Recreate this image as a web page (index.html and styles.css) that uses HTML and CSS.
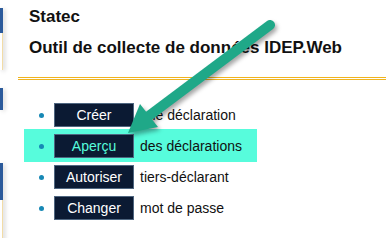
FILE: index.html
```html
<!DOCTYPE html>
<html lang="fr">
<head>
<meta charset="utf-8">
<title>IDEP.Web</title>
<link rel="stylesheet" href="styles.css">
</head>
<body>
<div class="page">
  <aside class="sidebar">
    <div class="card card-a"></div>
    <div class="card card-b"></div>
    <div class="card card-c"></div>
  </aside>
  <main class="main">
    <header class="head">
      <h1 class="title">Statec</h1>
      <h2 class="subtitle">Outil de collecte de données IDEP.Web</h2>
    </header>
    <ul class="menu">
      <li class="item"><span class="btn">Créer</span><span class="label">une déclaration</span></li>
      <li class="item active"><span class="btn">Aperçu</span><span class="label">des déclarations</span></li>
      <li class="item"><span class="btn">Autoriser</span><span class="label">tiers-déclarant</span></li>
      <li class="item"><span class="btn">Changer</span><span class="label">mot de passe</span></li>
    </ul>
  </main>
</div>
<svg class="arrow" width="386" height="238" viewBox="0 0 386 238">
  <line x1="270" y1="25" x2="146" y2="118" stroke="#1fa888" stroke-width="10" stroke-linecap="round"/>
  <polygon points="128,133 140,104 158,127" fill="#1fa888"/>
</svg>
</body>
</html>
```
FILE: styles.css
```css
html, body {
  margin: 0;
  padding: 0;
  background: #fff;
}
body {
  font-family: "Liberation Sans", Arial, sans-serif;
  color: #111;
  width: 386px;
  height: 238px;
  overflow: hidden;
  position: relative;
}
.page {
  display: flex;
}
.sidebar {
  width: 3px;
  flex: none;
  display: flex;
  flex-direction: column;
}
.card {
  width: 2px;
  border-right: 1px solid #f2dca6;
  box-shadow: 2px 1px 4px rgba(0,0,0,0.18);
  background: #fff;
}
.card-a {
  margin-top: 8px;
  height: 62px;
  background: linear-gradient(#2b5a9b 0, #2b5a9b 25px, #fff 25px);
  border-right-color: #2b5a9b;
  border-image: linear-gradient(#2b5a9b 0, #2b5a9b 25px, #f2dca6 25px) 1;
}
.card-b {
  margin-top: 18px;
  height: 22px;
  background: #2b5a9b;
  border-right-color: #2b5a9b;
}
.card-c {
  margin-top: 53px;
  height: 80px;
  background: linear-gradient(#2b5a9b 0, #2b5a9b 37px, #fff 37px);
  border-image: linear-gradient(#2b5a9b 0, #2b5a9b 37px, #f2dca6 37px) 1;
}
.main {
  margin-left: 15px;
  flex: 1;
}
.head {
  padding: 0 0 0 11px;
  border-bottom: 3px double #f0b41e;
  height: 77px;
}
.title {
  font-size: 17px;
  font-weight: bold;
  margin: 0;
  padding-top: 8px;
  line-height: 18px;
}
.subtitle {
  font-size: 17px;
  font-weight: bold;
  margin: 13px 0 0;
  line-height: 18px;
}
.menu {
  list-style: none;
  margin: 19px 0 0;
  padding: 0;
}
.item {
  display: flex;
  align-items: center;
  width: fit-content;
  padding: 4px 15px 3px 0;
  margin-left: 6px;
  font-size: 14px;
}
.item::before {
  content: "";
  width: 5px;
  height: 5px;
  border-radius: 50%;
  background: #1788b5;
  margin: 0 10px 0 15px;
}
.item.active {
  background: #57fcdc;
  padding-top: 5px;
  padding-bottom: 4px;
  margin-top: -1px;
  margin-bottom: -1px;
}
.btn {
  display: inline-flex;
  align-items: center;
  justify-content: center;
  box-sizing: border-box;
  width: 80px;
  height: 24px;
  background: #0b1a33;
  border: 1px solid #4f6680;
  color: #fff;
  font-size: 14px;
  margin-right: 6px;
}
.active .btn {
  color: #57fcdc;
}
.label {
  color: #111;
}
.arrow {
  position: absolute;
  left: 0;
  top: 0;
  filter: drop-shadow(2px 3px 2px rgba(0,0,0,0.35));
}
```
